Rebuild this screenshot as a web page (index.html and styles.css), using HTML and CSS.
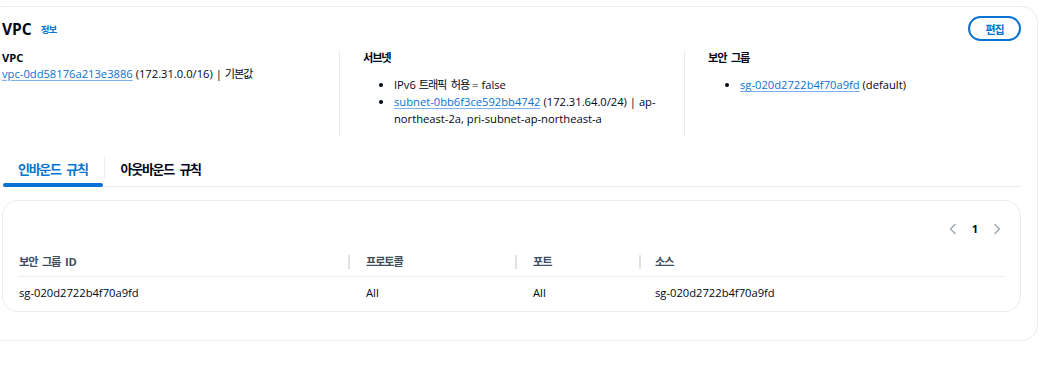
FILE: index.html
```html
<!DOCTYPE html>
<html lang="ko">
<head>
  <meta charset="UTF-8" />
  <title>VPC 정보</title>
  <link rel="stylesheet" href="styles.css">
</head>
<body>

  <div class="card">
    <div class="card-header">
      <div class="titulo">
        <h2>VPC</h2>
        <a href="#" class="info ko">정보</a>
      </div>
      <button class="btn-edit ko">편집</button>
    </div>

    <div class="colunas">
      <div class="coluna">
        <div class="rotulo">VPC</div>
        <div><a href="#" class="link">vpc-0dd58176a213e3886</a> (172.31.0.0/16) | <span class="ko">기본값</span></div>
      </div>
      <div class="coluna">
        <div class="rotulo ko">서브넷</div>
        <ul class="lista">
          <li>IPv6 <span class="ko">트래픽 허용</span> = false</li>
          <li><a href="#" class="link">subnet-0bb6f3ce592bb4742</a> (172.31.64.0/24) | ap-northeast-2a, pri-subnet-ap-northeast-a</li>
        </ul>
      </div>
      <div class="coluna">
        <div class="rotulo ko">보안 그룹</div>
        <ul class="lista">
          <li><a href="#" class="link">sg-020d2722b4f70a9fd</a> (default)</li>
        </ul>
      </div>
    </div>

    <div class="abas">
      <a href="#" class="aba ativa ko">인바운드 규칙</a>
      <span class="aba-sep"></span>
      <a href="#" class="aba ko">아웃바운드 규칙</a>
    </div>

    <div class="tabela-card">
      <div class="paginacao">
        <span class="pag-seta">
          <svg width="8" height="12" viewBox="0 0 8 12"><path d="M6.5 1 L1.5 6 L6.5 11" fill="none" stroke="currentColor" stroke-width="1.4"/></svg>
        </span>
        <span class="pag-num">1</span>
        <span class="pag-seta">
          <svg width="8" height="12" viewBox="0 0 8 12"><path d="M1.5 1 L6.5 6 L1.5 11" fill="none" stroke="currentColor" stroke-width="1.4"/></svg>
        </span>
      </div>

      <table class="tabela">
        <colgroup>
          <col style="width: 330px">
          <col style="width: 167px">
          <col style="width: 124px">
          <col>
        </colgroup>
        <thead>
          <tr>
            <th><span class="th-label ko">보안 그룹 <span class="latin">ID</span></span></th>
            <th><span class="th-label ko">프로토콜</span></th>
            <th><span class="th-label ko">포트</span></th>
            <th><span class="th-label ko">소스</span></th>
          </tr>
        </thead>
        <tbody>
          <tr>
            <td>sg-020d2722b4f70a9fd</td>
            <td>All</td>
            <td>All</td>
            <td>sg-020d2722b4f70a9fd</td>
          </tr>
        </tbody>
      </table>
    </div>
  </div>

</body>
</html>
```

FILE: styles.css
```css
body {
  font-family: "Open Sans", "Noto Sans CJK KR", sans-serif;
  font-size: 11.2px;
  line-height: 16px;
  color: #000716;
  background-color: #fff;
  margin: 0;
  overflow: hidden;
}

.ko {
  letter-spacing: -0.1em;
  word-spacing: 0.25em;
}

.latin {
  letter-spacing: 0;
  word-spacing: 0;
}

.card {
  box-sizing: border-box;
  width: 1053px;
  margin: 6px 0 0 -15px;
  padding: 9px 16px 28px 16px;
  border: 1px solid #e9ebed;
  border-radius: 16px;
}

.card-header {
  display: flex;
  justify-content: space-between;
  align-items: center;
  height: 25px;
}

.titulo {
  display: flex;
  align-items: center;
  gap: 9px;
}

.titulo h2 {
  margin: 0;
  font-size: 15.5px;
  font-weight: 700;
  line-height: 20px;
}

.info {
  font-size: 9.5px;
  font-weight: 700;
  color: #0972d3;
  text-decoration: none;
  margin-top: 2px;
}

.btn-edit {
  box-sizing: border-box;
  width: 53px;
  height: 25px;
  border: 2px solid #0972d3;
  border-radius: 20px;
  background: #fff;
  color: #0972d3;
  font-family: "Noto Sans CJK KR", sans-serif;
  font-size: 11px;
  font-weight: 700;
  padding: 0;
  cursor: pointer;
}

.colunas {
  display: grid;
  grid-template-columns: 337px 345px 1fr;
  margin-top: 9px;
}

.coluna {
  padding-bottom: 9px;
}

.coluna + .coluna {
  border-left: 1px solid #e9ebed;
  padding-left: 23px;
}

.rotulo {
  font-weight: 700;
}

.link {
  color: #0972d3;
  text-decoration: underline;
  text-decoration-color: #7eb1ea;
  text-underline-offset: 2px;
}

.lista {
  margin: 10px 0 0 0;
  padding-left: 31px;
  line-height: 17px;
}

.coluna:last-child .lista {
  padding-left: 32px;
}

.abas {
  display: flex;
  align-items: center;
  margin-top: 16px;
  border-bottom: 1px solid #e9ebed;
}

.aba {
  position: relative;
  display: flex;
  align-items: center;
  height: 34px;
  padding: 0 16px;
  font-family: "Noto Sans CJK KR", sans-serif;
  font-size: 13px;
  font-weight: 700;
  color: #000716;
  text-decoration: none;
}

.aba.ativa {
  color: #0972d3;
}

.aba.ativa::after {
  content: "";
  position: absolute;
  left: 1px;
  right: 1px;
  bottom: -1px;
  height: 4px;
  border-radius: 2px;
  background-color: #0972d3;
}

.aba-sep {
  width: 1px;
  height: 21px;
  margin-top: -3px;
  background-color: #e9ebed;
}

.tabela-card {
  margin-top: 13px;
  padding: 18px 15px 2px 15px;
  border: 1px solid #e9ebed;
  border-radius: 16px;
}

.paginacao {
  display: flex;
  justify-content: flex-end;
  align-items: center;
  height: 20px;
  margin-right: -3px;
}

.pag-seta,
.pag-num {
  display: flex;
  justify-content: center;
  align-items: center;
  width: 22px;
}

.pag-seta {
  color: #9ba7b6;
}

.pag-num {
  font-weight: 700;
}

.tabela {
  width: 100%;
  margin-top: 9px;
  border-collapse: collapse;
  table-layout: fixed;
}

.tabela th {
  padding: 7px 0;
  text-align: left;
  font-weight: 700;
  color: #414d5c;
  border-bottom: 1px solid #e9ebed;
}

.th-label {
  display: block;
  line-height: 14px;
  padding-left: 16px;
  border-left: 2px solid #dfe2e5;
}

.tabela th:first-child .th-label {
  border-left: none;
  padding-left: 1px;
}

.tabela th:last-child .th-label {
  padding-left: 14px;
}

.tabela td {
  padding: 8px 0 8px 18px;
  line-height: 16px;
}

.tabela td:first-child {
  padding-left: 1px;
}

.tabela td:last-child {
  padding-left: 16px;
}
```
